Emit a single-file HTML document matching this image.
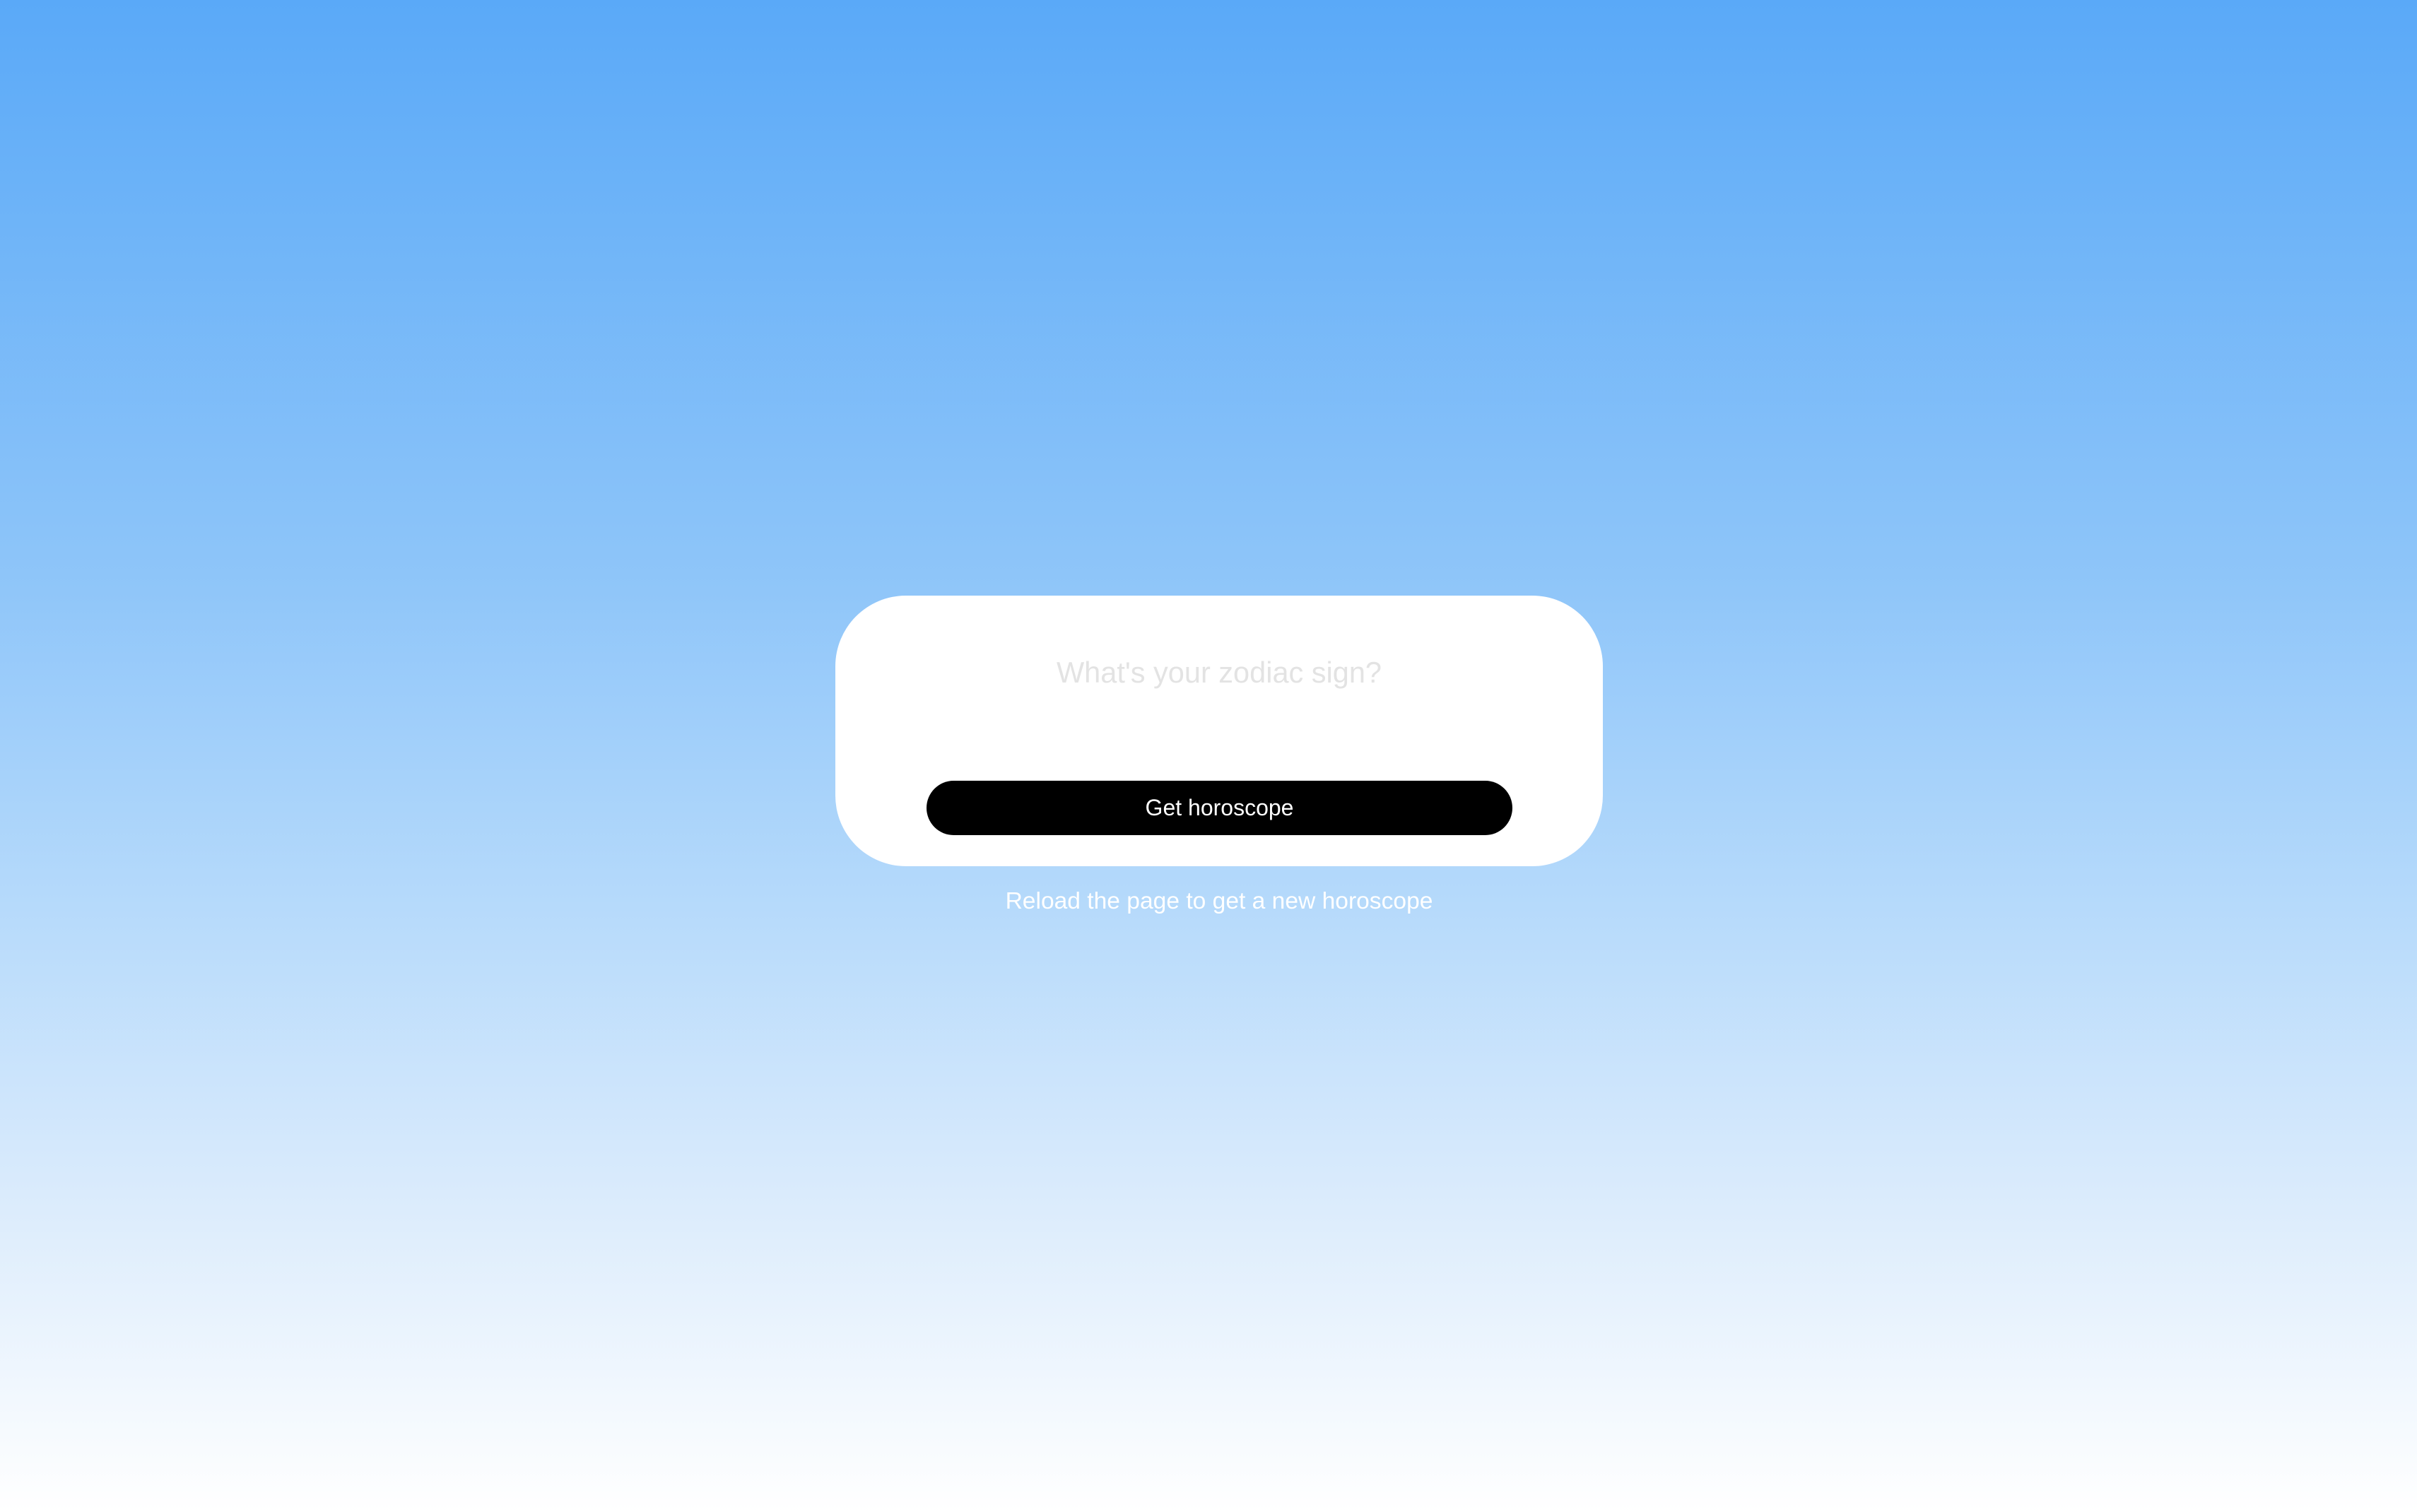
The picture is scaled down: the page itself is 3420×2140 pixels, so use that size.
<!DOCTYPE html>
<html><head><meta charset="utf-8"><style>
html,body{margin:0;padding:0;}
body{width:3420px;height:2140px;background:linear-gradient(to bottom,#5aa9f8 0%,#8ec5f9 38%,#b6dafb 60%,#dcecfc 80%,#ffffff 100%);font-family:"Liberation Sans",sans-serif;position:relative;overflow:hidden;}
.card{position:absolute;left:1182px;top:843px;width:1086px;height:383px;background:#fff;border-radius:100px;}
.ph{position:absolute;left:1182px;width:1086px;top:928px;text-align:center;font-size:41.5px;color:#e3e3e3;}
.btn{position:absolute;left:1311px;top:1105px;width:829px;height:77px;background:#000;border-radius:39px;color:#fff;font-size:32px;text-align:center;line-height:77px;}
.rel{position:absolute;left:1182px;width:1086px;top:1257px;text-align:center;font-size:33.6px;color:#fff;}
</style></head><body>
<div class="card"></div>
<div class="ph">What's your zodiac sign?</div>
<div class="btn">Get horoscope</div>
<div class="rel">Reload the page to get a new horoscope</div>
</body></html>
